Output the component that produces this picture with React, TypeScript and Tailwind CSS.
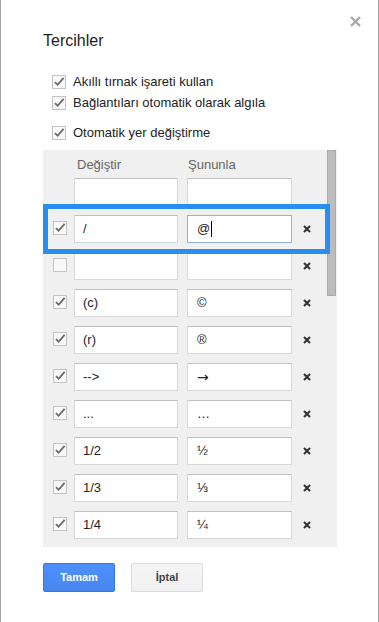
import React from "react";

function Check({ checked = true }: { checked?: boolean }) {
  return (
    <svg width="14" height="14" viewBox="0 0 14 14" className="shrink-0">
      <rect x="0.5" y="0.5" width="13" height="13" fill="#f8f8f8" stroke="#c4c4c4" />
      {checked && (
        <path d="M3 7.2 L5.6 9.8 L11.6 2.8" fill="none" stroke="#6a6a6a" strokeWidth="1.8" />
      )}
    </svg>
  );
}

function SmallX() {
  return (
    <svg width="8" height="8" viewBox="0 0 8 8">
      <path d="M1 1 L7 7 M7 1 L1 7" stroke="#333" strokeWidth="2.1" strokeLinecap="butt" />
    </svg>
  );
}

type Row = { a: string; b: string; checked?: boolean; box?: boolean; del?: boolean; focus?: boolean; arrow?: boolean };

const rows: Row[] = [
  { a: "", b: "", box: false, del: false },
  { a: "/", b: "@", checked: true, box: true, del: true, focus: true },
  { a: "", b: "", checked: false, box: true, del: true },
  { a: "(c)", b: "©", checked: true, box: true, del: true },
  { a: "(r)", b: "®", checked: true, box: true, del: true },
  { a: "-->", b: "→", checked: true, box: true, del: true, arrow: true },
  { a: "...", b: "…", checked: true, box: true, del: true },
  { a: "1/2", b: "½", checked: true, box: true, del: true },
  { a: "1/3", b: "⅓", checked: true, box: true, del: true },
  { a: "1/4", b: "¼", checked: true, box: true, del: true },
];

export default function App() {
  return (
    <div
      className="relative w-[379px] h-[622px] bg-white border-l border-r border-[#a3a3a3] text-[#222]"
      style={{ fontFamily: '"Liberation Sans", Arial, "DejaVu Sans", sans-serif' }}
    >
      <div className="absolute top-[16px] right-[17px]">
        <svg width="11" height="11" viewBox="0 0 11 11">
          <path d="M1 1 L10 10 M10 1 L1 10" stroke="#a8a8a8" strokeWidth="2.4" />
        </svg>
      </div>

      <div className="pt-[31px] pl-[42px]">
        <div className="h-[20px] leading-[20px] text-[16px] text-[#222]">Tercihler</div>

        <div className="mt-[20px] pl-[9px] text-[13px]">
          <div className="h-[21px] flex items-center gap-[7px]">
            <Check />
            <span>Akıllı tırnak işareti kullan</span>
          </div>
          <div className="h-[21px] flex items-center gap-[7px]">
            <Check />
            <span>Bağlantıları otomatik olarak algıla</span>
          </div>
          <div className="mt-[9px] h-[21px] flex items-center gap-[7px]">
            <Check />
            <span>Otomatik yer değiştirme</span>
          </div>
        </div>

        <div className="relative mt-[7px] w-[294px] h-[397px] bg-[#f0f0f0] flex overflow-hidden">
          <div className="flex-1 pl-[10px]">
            <div className="h-[28px] pt-[7px] flex text-[13px] leading-[16px] text-[#666]">
              <div className="w-[21px]" />
              <div className="w-[113px] pl-[3px]">Değiştir</div>
              <div className="pl-[1px]">Şununla</div>
            </div>
            {rows.map((r, i) => (
              <div key={i} className="h-[28px] mb-[9px] flex items-center">
                <div className="w-[14px] h-[14px] -mt-[2px]">{r.box && <Check checked={r.checked} />}</div>
                <div className="ml-[7px] w-[104px] h-[28px] bg-white border border-[#d9d9d9] border-t-[#c0c0c0] pl-[8px] flex items-center text-[13px] text-[#222]">
                  {r.a}
                </div>
                <div
                  className={
                    r.focus
                      ? "ml-[9px] w-[105px] h-[28px] bg-white border border-[#8fb2e3] pl-[9px] flex items-center text-[13px] text-[#222]"
                      : "ml-[9px] w-[105px] h-[28px] bg-white border border-[#d9d9d9] border-t-[#c0c0c0] pl-[9px] flex items-center text-[13px] text-[#222]"
                  }
                >
                  {r.arrow ? (
                    <span className="text-[14px]" style={{ fontFamily: '"DejaVu Sans", sans-serif' }}>
                      {r.b}
                    </span>
                  ) : (
                    r.b
                  )}
                  {r.focus && <span className="ml-[1px] w-[1px] h-[16px] bg-black" />}
                </div>
                <div className="ml-[11px] w-[8px] h-[8px] flex">{r.del && <SmallX />}</div>
              </div>
            ))}
          </div>
          <div className="w-[10px] pr-[1px]">
            <div className="w-[9px] h-[146px] bg-[#bcbcbc] border border-[#aaaaaa]" />
          </div>
          <div className="absolute left-0 top-[54px] w-[287px] h-[50px] border-[5px] border-[#2a8ef0]" />
        </div>

        <div className="mt-[16px] flex gap-[16px]">
          <div className="w-[72px] h-[29px] rounded-[2px] border border-[#3079ed] bg-gradient-to-b from-[#4d90fe] to-[#4787ed] text-white text-[11px] font-bold flex items-center justify-center">
            Tamam
          </div>
          <div className="w-[72px] h-[29px] rounded-[2px] border border-[#dcdcdc] bg-gradient-to-b from-[#f5f5f5] to-[#f1f1f1] text-[#444] text-[11px] font-bold flex items-center justify-center">
            İptal
          </div>
        </div>
      </div>
    </div>
  );
}
